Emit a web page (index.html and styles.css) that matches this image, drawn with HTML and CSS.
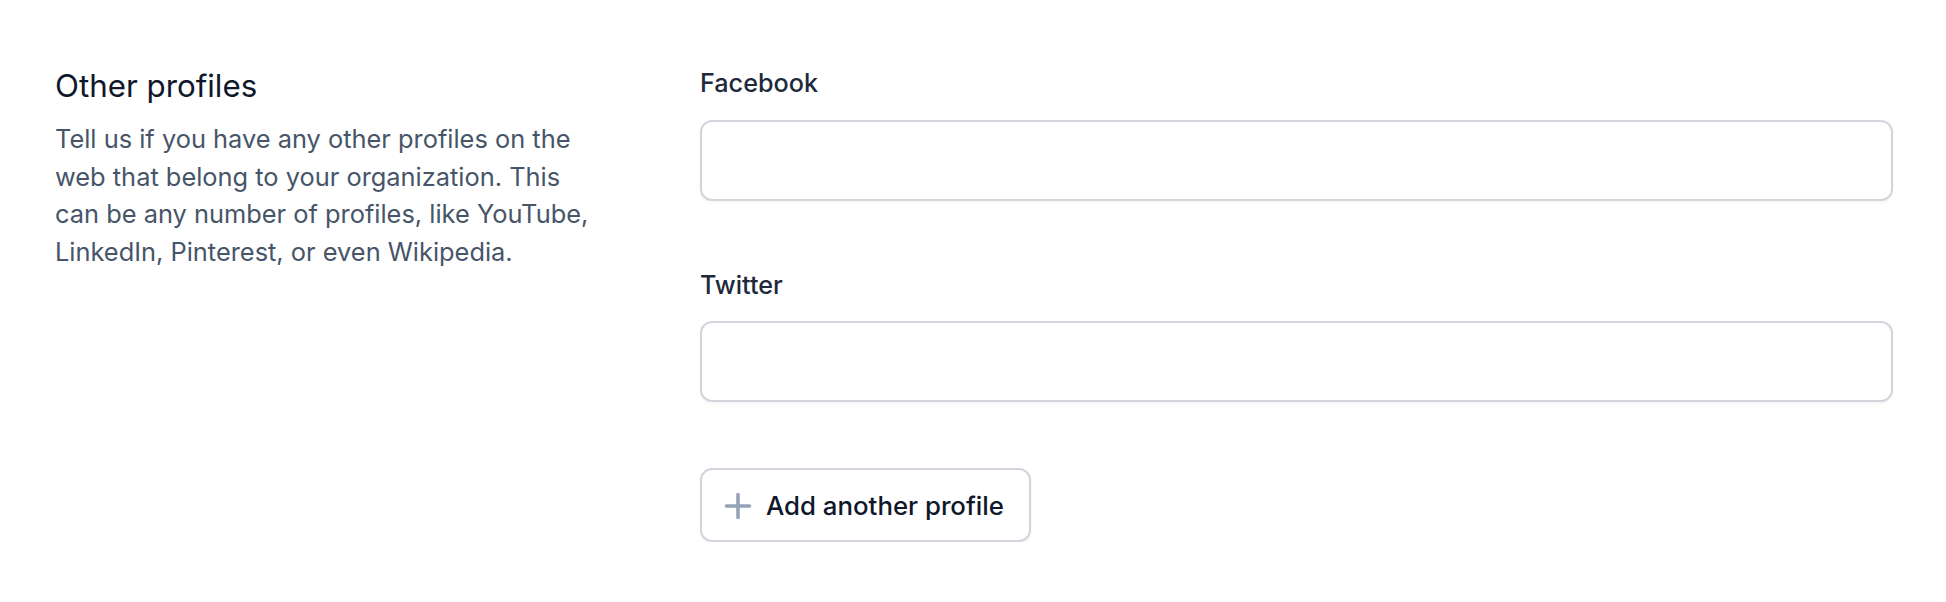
FILE: index.html
```html
<!DOCTYPE html>
<html lang="en">
<head>
<meta charset="utf-8">
<title>Other profiles</title>
<link rel="stylesheet" href="styles.css">
</head>
<body>
<section class="section">
  <div class="intro">
    <h2 class="title">Other profiles</h2>
    <p class="desc">Tell us if you have any other profiles on the web that belong to your organization. This can be any number of profiles, like YouTube, LinkedIn, Pinterest, or even Wikipedia.</p>
  </div>
  <div class="fields">
    <div class="field">
      <label class="label" for="facebook">Facebook</label>
      <input class="input" id="facebook" type="text">
    </div>
    <div class="field">
      <label class="label" for="twitter">Twitter</label>
      <input class="input" id="twitter" type="text">
    </div>
    <div class="field">
      <button class="add-btn" type="button">
        <svg class="plus" width="28" height="28" viewBox="0 0 28 28" aria-hidden="true">
          <path d="M14 2.5v23M2.5 14h23" stroke="#94a3b8" stroke-width="3.6" stroke-linecap="round" fill="none"/>
        </svg>
        <span>Add another profile</span>
      </button>
    </div>
  </div>
</section>
</body>
</html>
```
FILE: styles.css
```css
html, body {
  margin: 0;
  padding: 0;
  background: #ffffff;
}

body {
  font-family: Inter, "Noto Sans", "Liberation Sans", sans-serif;
  -webkit-font-smoothing: antialiased;
}

.section {
  display: grid;
  grid-template-columns: repeat(3, 1fr);
  column-gap: 97px;
  padding: 65px 53px 0 55px;
}

.intro {
  grid-column: 1 / 2;
}

.title {
  margin: 0;
  font-size: 31.3px;
  line-height: 42px;
  font-weight: 400;
  color: #0f172a;
}

.desc {
  margin: 13px 0 0;
  font-size: 25.4px;
  line-height: 37.5px;
  font-weight: 400;
  color: #475569;
}

.fields {
  grid-column: 2 / 4;
  display: flex;
  flex-direction: column;
  gap: 66px;
}

.field {
  display: flex;
  flex-direction: column;
  align-items: flex-start;
}

.label {
  font-size: 25.2px;
  line-height: 37.5px;
  font-weight: 500;
  color: #1e293b;
  margin-bottom: 17px;
}

.input {
  box-sizing: border-box;
  width: 100%;
  height: 81px;
  border: 2px solid #d3d5dd;
  border-radius: 12px;
  background: #ffffff;
  box-shadow: 0 2px 3px rgba(0, 0, 0, 0.04);
  font: inherit;
  font-size: 25px;
  padding: 0 20px;
  outline: none;
}

.add-btn {
  box-sizing: border-box;
  display: flex;
  align-items: center;
  gap: 14px;
  height: 74px;
  padding: 2px 25px 0 22px;
  border: 2px solid #d3d5dd;
  border-radius: 12px;
  background: #ffffff;
  box-shadow: 0 2px 3px rgba(0, 0, 0, 0.04);
  font-family: inherit;
  font-size: 25.8px;
  line-height: 37.5px;
  font-weight: 500;
  color: #0f172a;
  cursor: pointer;
}

.plus {
  display: block;
  flex: none;
}
```
